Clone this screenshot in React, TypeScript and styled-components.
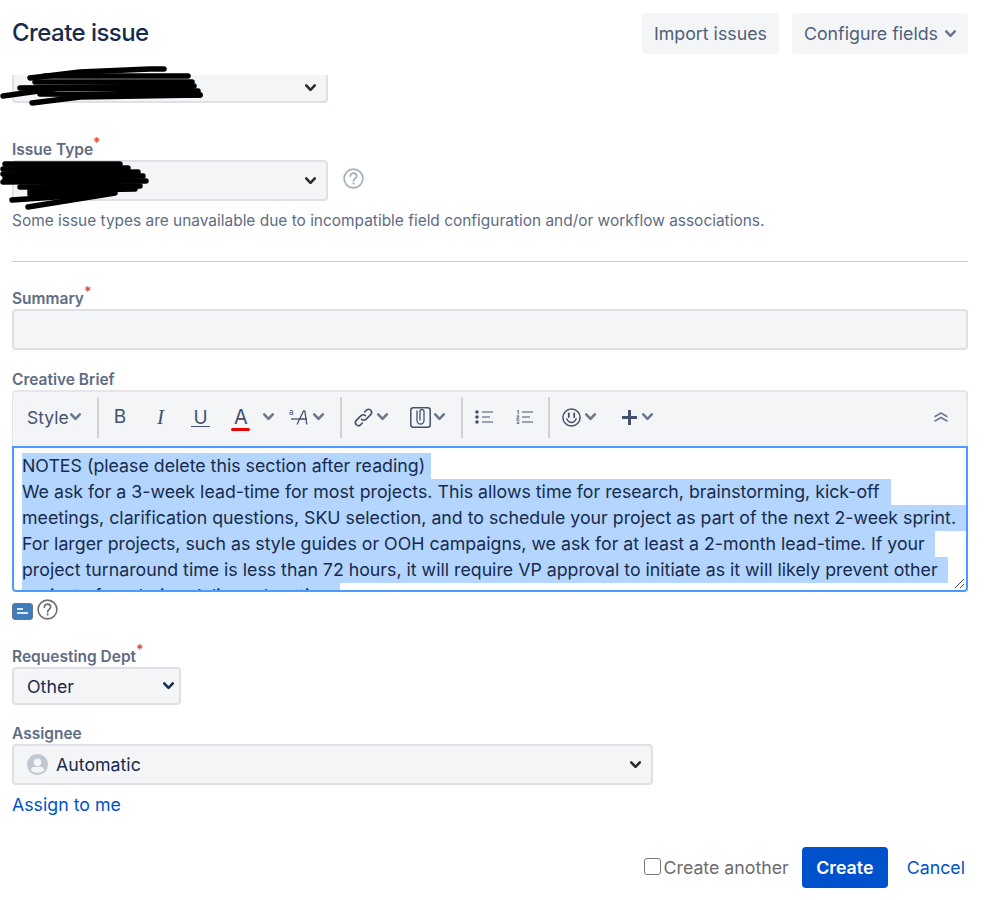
import React from 'react';
import styled, { createGlobalStyle } from 'styled-components';

const GlobalStyle = createGlobalStyle`
  html, body {
    margin: 0;
    padding: 0;
    background: #ffffff;
    font-family: 'Inter', 'Liberation Sans', sans-serif;
    color: #172b4d;
  }
`;

const Page = styled.div`
  width: 999px;
  height: 900px;
  box-sizing: border-box;
  padding: 0 31px 0 12px;
  overflow: hidden;
`;

const Header = styled.div`
  height: 75px;
  display: flex;
  align-items: flex-start;
  justify-content: space-between;
`;
const Title = styled.h1`
  margin: 17px 0 0;
  font-size: 24px;
  line-height: 32px;
  font-weight: 500;
  letter-spacing: -0.55px;
  color: #172b4d;
`;
const HeaderActions = styled.div`
  display: flex;
  gap: 13px;
  margin-top: 13px;
`;
const GhostButton = styled.div`
  height: 41px;
  padding: 0 12px;
  display: flex;
  align-items: center;
  gap: 7px;
  background: #f4f5f7;
  border-radius: 4px;
  font-size: 17.8px;
  color: #505f79;
`;

const Label = styled.div<{ $top: number }>`
  margin-top: ${(p) => p.$top}px;
  height: 22px;
  line-height: 24px;
  font-size: 15.5px;
  font-weight: 600;
  color: #5e6c84;
  position: relative;
  width: fit-content;
`;
const Star = styled.span`
  position: absolute;
  left: 100%;
  top: -3px;
  color: #e5493a;
  font-size: 14px;
  line-height: 16px;
`;

const FieldRow = styled.div`
  position: relative;
  display: flex;
  align-items: center;
  gap: 15px;
`;
const HelpSlot = styled.div`
  display: flex;
  margin-bottom: 4px;
`;
const SelectBox = styled.div<{ $w: number; $h: number; $clip?: boolean; $strong?: boolean }>`
  width: ${(p) => p.$w}px;
  height: ${(p) => p.$h}px;
  box-sizing: border-box;
  display: flex;
  align-items: center;
  justify-content: space-between;
  padding: 0 ${(p) => (p.$strong ? 5 : 10)}px 0 14px;
  background: #f4f5f7;
  border: 2px solid #dfe1e6;
  border-top-width: ${(p) => (p.$clip ? 0 : 2)}px;
  border-radius: ${(p) => (p.$clip ? '0 0 4px 4px' : '4px')};
  font-size: 17.75px;
  color: #172b4d;
`;
const SelectValue = styled.span`
  display: flex;
  align-items: center;
  gap: 8px;
  margin-left: -1px;
`;
const Redaction = styled.svg`
  position: absolute;
  left: -12px;
  pointer-events: none;
`;
const HelpText = styled.div`
  margin-top: 9px;
  font-size: 15.45px;
  line-height: 22px;
  color: #5e6c84;
`;
const Divider = styled.hr`
  margin: 29px 0 0;
  border: 0;
  height: 1px;
  background: #c9ccd2;
`;
const TextInput = styled.div`
  height: 41px;
  box-sizing: border-box;
  background: #f4f5f7;
  border: 2px solid #dfe1e6;
  border-radius: 4px;
`;

const Toolbar = styled.div`
  height: 56px;
  box-sizing: border-box;
  display: flex;
  align-items: center;
  padding: 0 0 4px 14px;
  background: #f4f5f7;
  border: 2px solid #e4e6ea;
  border-left-width: 1px;
  border-bottom: 0;
  border-radius: 4px 4px 0 0;
`;
const ToolCell = styled.div<{ $w: number; $pad?: number }>`
  width: ${(p) => p.$w}px;
  height: 30px;
  flex: none;
  display: flex;
  align-items: center;
  justify-content: ${(p) => (p.$pad === undefined ? 'center' : 'flex-start')};
  padding-left: ${(p) => p.$pad ?? 0}px;
  box-sizing: border-box;
  color: #42526e;
`;
const ToolSep = styled.div<{ $left?: number }>`
  width: 2px;
  height: 41px;
  flex: none;
  margin-left: ${(p) => p.$left ?? 0}px;
  background: #d0d2d6;
`;
const StyleText = styled.span`
  font-size: 17.5px;
  color: #42526e;
  margin-right: 1px;
`;
const ToolLetter = styled.span`
  font-size: 19px;
  line-height: 22px;
  color: #42526e;
`;
const ItalicLetter = styled.span`
  font-family: 'Liberation Serif', serif;
  font-size: 21px;
  font-style: italic;
  line-height: 22px;
  color: #42526e;
`;
const UnderLetter = styled.span`
  font-size: 19px;
  line-height: 17px;
  height: 17px;
  margin-top: 2px;
  padding: 0 2px;
  border-bottom: 1.5px solid #42526e;
  color: #42526e;
`;
const ColorLetter = styled.span`
  position: relative;
  width: 20px;
  text-align: center;
  font-size: 20px;
  line-height: 22px;
  color: #42526e;
  margin-right: 12px;
  &::after {
    content: '';
    position: absolute;
    left: 0;
    right: 1px;
    bottom: -3px;
    height: 3px;
    border-radius: 2px;
    background: #f10000;
  }
`;
const ToolSpacer = styled.div`
  margin-left: auto;
  margin-right: 18px;
  display: flex;
`;

const Editor = styled.div`
  height: 146px;
  box-sizing: border-box;
  position: relative;
  overflow: hidden;
  padding: 5px 0 0 8px;
  border: 2px solid #4c9aff;
  border-radius: 0 0 4px 4px;
  background: #ffffff;
`;
const Line = styled.div<{ $trail?: number }>`
  width: fit-content;
  height: 26px;
  line-height: 26px;
  padding-right: ${(p) => p.$trail ?? 0}px;
  background: #b4d5fe;
  font-size: 17.75px;
  white-space: nowrap;
  color: #172b4d;
`;
const Grip = styled.svg`
  position: absolute;
  right: 1px;
  bottom: 1px;
`;
const EditorHints = styled.div`
  display: flex;
  align-items: center;
  gap: 4px;
  height: 21px;
  margin-top: 7px;
`;
const ModeBadge = styled.div`
  width: 21px;
  height: 17px;
  margin-top: 3px;
  box-sizing: border-box;
  display: flex;
  flex-direction: column;
  justify-content: center;
  gap: 2px;
  padding-left: 4px;
  background: #3e7cbd;
  border: 1px solid #66788f;
  border-radius: 3px;
`;
const BadgeBar = styled.span<{ $w: number }>`
  display: block;
  width: ${(p) => p.$w}px;
  height: 2px;
  background: #dbe8f6;
`;

const LinkText = styled.a`
  display: block;
  width: fit-content;
  margin-top: 8px;
  font-size: 17.75px;
  line-height: 24px;
  color: #0052cc;
`;
const Footer = styled.div`
  margin-top: 30px;
  height: 41px;
  display: flex;
  align-items: center;
  justify-content: flex-end;
  padding-right: 3px;
`;
const CheckLabel = styled.label`
  display: flex;
  align-items: center;
  gap: 3px;
  font-size: 17.75px;
  color: #6b6b6b;
  margin-right: 13px;
`;
const Check = styled.input`
  appearance: none;
  width: 17px;
  height: 17px;
  margin: -3px 0 0;
  box-sizing: border-box;
  border: 1.5px solid #767676;
  border-radius: 3px;
  background: #ffffff;
`;
const PrimaryButton = styled.button`
  width: 86px;
  height: 41px;
  border: 0;
  border-radius: 4px;
  background: #0052cc;
  color: #ffffff;
  font-family: inherit;
  font-size: 17.75px;
  font-weight: 600;
`;
const CancelLink = styled.a`
  margin-left: 19px;
  font-size: 17.75px;
  color: #0052cc;
`;

const Chevron = ({ size = 11, color = '#6b778c', weight = 2.6 }: { size?: number; color?: string; weight?: number }) => (
  <svg width={size} height={size * 0.7} viewBox="0 0 11 7.7" fill="none" style={{ flex: 'none' }}>
    <path d="M1.2 1.4 5.5 5.8 9.8 1.4" stroke={color} strokeWidth={weight} strokeLinecap="round" strokeLinejoin="round" />
  </svg>
);

const HelpIcon = ({ color, size = 21 }: { color: string; size?: number }) => (
  <svg width={size} height={size} viewBox="0 0 21 21" fill="none">
    <circle cx="10.5" cy="10.5" r="9.4" stroke={color} strokeWidth="1.6" />
    <path d="M7.3 8.2c.1-1.9 1.4-3 3.2-3s3.2 1.1 3.2 2.8c0 2.4-3.1 2.4-3.1 4.9" stroke={color} strokeWidth="1.7" strokeLinecap="round" />
    <circle cx="10.6" cy="15.5" r="1.1" fill={color} />
  </svg>
);

const Avatar = () => (
  <svg width="21" height="21" viewBox="0 0 21 21">
    <circle cx="10.5" cy="10.5" r="10.5" fill="#c1c7d0" />
    <circle cx="10.5" cy="8.2" r="3.8" fill="#f4f5f7" />
    <path d="M4 16.2c0-2.2 1.6-3.4 3.4-3.4h6.2c1.8 0 3.4 1.2 3.4 3.4-1.5 1.6-3.9 2.6-6.5 2.6S5.500 17.800 4 16.200z" fill="#f4f5f7" />
  </svg>
);

const Scribble = ({ top, height, d, width }: { top: number; height: number; width: number; d: string[] }) => (
  <Redaction style={{ top }} width={width} height={height} viewBox={`0 0 ${width} ${height}`} fill="none">
    {d.map((line) => (
      <path key={line} d={line} stroke="#000" strokeWidth="5.5" strokeLinecap="round" strokeLinejoin="round" />
    ))}
  </Redaction>
);

const App = () => {
  return (
    <Page>
      <GlobalStyle />
      <Header>
        <Title>Create issue</Title>
        <HeaderActions>
          <GhostButton>Import issues</GhostButton>
          <GhostButton>
            Configure fields
            <Chevron />
          </GhostButton>
        </HeaderActions>
      </Header>

      <FieldRow>
        <SelectBox $w={316} $h={28} $clip>
          <span />
          <Chevron color="#2c2c2c" />
        </SelectBox>
        <Scribble
          top={-9}
          width={206}
          height={42}
          d={[
            'M30 12 L80 6 L150 3 L164 3',
            'M45 10 L188 10',
            'M35 16 L192 16',
            'M20 22 L194 20',
            'M3 30 L60 22 L198 25',
            'M40 28 L200 29',
            'M32 37 L80 31 L200 29',
          ]}
        />
      </FieldRow>

      <Label $top={35}>
        Issue Type<Star>*</Star>
      </Label>
      <FieldRow>
        <SelectBox $w={316} $h={41}>
          <span />
          <Chevron color="#2c2c2c" />
        </SelectBox>
        <HelpSlot>
          <HelpIcon color="#a5adba" />
        </HelpSlot>
        <Scribble
          top={1}
          width={150}
          height={50}
          d={[
            'M5 3 L120 3',
            'M3 8 L128 7',
            'M3 13 L138 11',
            'M5 17 L143 15',
            'M3 21 L146 20',
            'M20 26 L140 25',
            'M30 30 L135 28',
            'M30 33 L110 31',
            'M12 39 L100 33',
            'M28 46 L115 32',
          ]}
        />
      </FieldRow>
      <HelpText>Some issue types are unavailable due to incompatible field configuration and/or workflow associations.</HelpText>
      <Divider />

      <Label $top={25}>
        Summary<Star>*</Star>
      </Label>
      <TextInput />

      <Label $top={18}>Creative Brief</Label>
      <Toolbar>
        <ToolCell $w={70} $pad={0}>
          <StyleText>Style</StyleText>
          <Chevron />
        </ToolCell>
        <ToolSep />
        <ToolCell $w={42}>
          <ToolLetter>B</ToolLetter>
        </ToolCell>
        <ToolCell $w={39}>
          <ItalicLetter>I</ItalicLetter>
        </ToolCell>
        <ToolCell $w={41}>
          <UnderLetter>U</UnderLetter>
        </ToolCell>
        <ToolCell $w={60} $pad={10}>
          <ColorLetter>A</ColorLetter>
          <Chevron />
        </ToolCell>
        <ToolCell $w={59} $pad={8}>
          <svg width="22" height="18" viewBox="0 0 22 18" fill="none" style={{ marginRight: 2 }}>
            <text x="0" y="7" fontSize="8" fontFamily="Inter, sans-serif" fill="#42526e">a</text>
            <path d="M8 16.500 14.500 3h1.300l2 13.500M10 11h8" stroke="#42526e" strokeWidth="1.300" strokeLinejoin="round" />
            <path d="M2 11h8" stroke="#42526e" strokeWidth="1.300" />
          </svg>
          <Chevron />
        </ToolCell>
        <ToolSep />
        <ToolCell $w={57} $pad={11}>
          <svg width="21" height="21" viewBox="0 0 21 21" fill="none" style={{ marginRight: 3 }}>
            <path d="M8.600 12.400a3 3 0 0 0 4.300 0l5-5a3.100 3.100 0 0 0-4.300-4.400l-2 2" stroke="#42526e" strokeWidth="1.600" strokeLinecap="round" />
            <path d="M12.400 8.600a3 3 0 0 0-4.300 0l-5 5a3.100 3.100 0 0 0 4.300 4.400l2-2" stroke="#42526e" strokeWidth="1.600" strokeLinecap="round" />
          </svg>
          <Chevron />
        </ToolCell>
        <ToolCell $w={62} $pad={11}>
          <svg width="21" height="21" viewBox="0 0 21 21" fill="none" style={{ marginRight: 3 }}>
            <rect x="0.800" y="0.800" width="19.400" height="19.400" rx="2.500" stroke="#42526e" strokeWidth="1.500" />
            <path d="M7 4v9.500a3.500 3.500 0 0 0 7 0V4.500a2 2 0 0 0-4 0V13" stroke="#42526e" strokeWidth="1.300" strokeLinecap="round" />
          </svg>
          <Chevron />
        </ToolCell>
        <ToolSep />
        <ToolCell $w={42}>
          <svg width="18" height="14" viewBox="0 0 18 14" fill="none">
            <circle cx="2" cy="2" r="1.800" fill="#42526e" />
            <circle cx="2" cy="7" r="1.800" fill="#42526e" />
            <circle cx="2" cy="12" r="1.800" fill="#42526e" />
            <path d="M7 2h11M7 7h8M7 12h11" stroke="#42526e" strokeWidth="1.200" />
          </svg>
        </ToolCell>
        <ToolCell $w={38}>
          <svg width="17" height="14" viewBox="0 0 17 14" fill="none">
            <path d="M1 1.200 2.300 .6v3.600M.6 6h2.500L.6 9h2.700M.6 10.800h2.600M1.600 12.400h1.600M.6 13.700h2.600" stroke="#42526e" strokeWidth=".9" />
            <path d="M6 2h11M6 7h8M6 12h11" stroke="#42526e" strokeWidth="1.200" />
          </svg>
        </ToolCell>
        <ToolSep $left={5} />
        <ToolCell $w={59} $pad={12}>
          <svg width="19" height="19" viewBox="0 0 19 19" fill="none" style={{ marginRight: 4 }}>
            <circle cx="9.500" cy="9.500" r="8.600" stroke="#42526e" strokeWidth="1.500" />
            <path d="M6.800 5.500v3.500M12.200 5.500v3.500" stroke="#42526e" strokeWidth="1.800" strokeLinecap="round" />
            <path d="M4.800 10.800c1 2.500 2.700 3.700 4.700 3.700s3.700-1.200 4.700-3.700" stroke="#42526e" strokeWidth="1.400" strokeLinecap="round" />
          </svg>
          <Chevron />
        </ToolCell>
        <ToolCell $w={60} $pad={13}>
          <svg width="15" height="15" viewBox="0 0 15 15" style={{ marginRight: 5 }}>
            <path d="M6 0h3v6h6v3H9v6H6V9H0V6h6z" fill="#42526e" />
          </svg>
          <Chevron />
        </ToolCell>
        <ToolSpacer>
          <svg width="14" height="10" viewBox="0 0 14 10" fill="none">
            <path d="M1 4.500 7 1l6 3.500M1 9 7 5.500 13 9" stroke="#6b778c" strokeWidth="1.500" strokeLinecap="round" strokeLinejoin="round" />
          </svg>
        </ToolSpacer>
      </Toolbar>
      <Editor>
        <Line $trail={6}>NOTES (please delete this section after reading)</Line>
        <Line $trail={11}>We ask for a 3-week lead-time for most projects. This allows time for research, brainstorming, kick-off</Line>
        <Line $trail={11}>meetings, clarification questions, SKU selection, and to schedule your project as part of the next 2-week sprint.</Line>
        <Line $trail={10}>For larger projects, such as style guides or OOH campaigns, we ask for at least a 2-month lead-time. If your</Line>
        <Line $trail={10}>project turnaround time is less than 72 hours, it will require VP approval to initiate as it will likely prevent other</Line>
        <Line>projects from being delivered on time.</Line>
        <Grip width="11" height="11" viewBox="0 0 11 11" fill="none">
          <path d="M1 10 10 1M6 10l4-4" stroke="#555" strokeWidth="1" />
        </Grip>
      </Editor>
      <EditorHints>
        <ModeBadge>
          <BadgeBar $w={6} />
          <BadgeBar $w={11} />
        </ModeBadge>
        <HelpIcon color="#6f6f6f" />
      </EditorHints>

      <Label $top={25}>
        Requesting Dept<Star>*</Star>
      </Label>
      <SelectBox $w={169} $h={38} $strong>
        <SelectValue>Other</SelectValue>
        <Chevron color="#172b4d" />
      </SelectBox>

      <Label $top={17}>Assignee</Label>
      <SelectBox $w={641} $h={41}>
        <SelectValue>
          <Avatar />
          Automatic
        </SelectValue>
        <Chevron color="#2c2c2c" />
      </SelectBox>
      <LinkText>Assign to me</LinkText>

      <Footer>
        <CheckLabel>
          <Check type="checkbox" />
          Create another
        </CheckLabel>
        <PrimaryButton>Create</PrimaryButton>
        <CancelLink>Cancel</CancelLink>
      </Footer>
    </Page>
  );
};

export default App;
